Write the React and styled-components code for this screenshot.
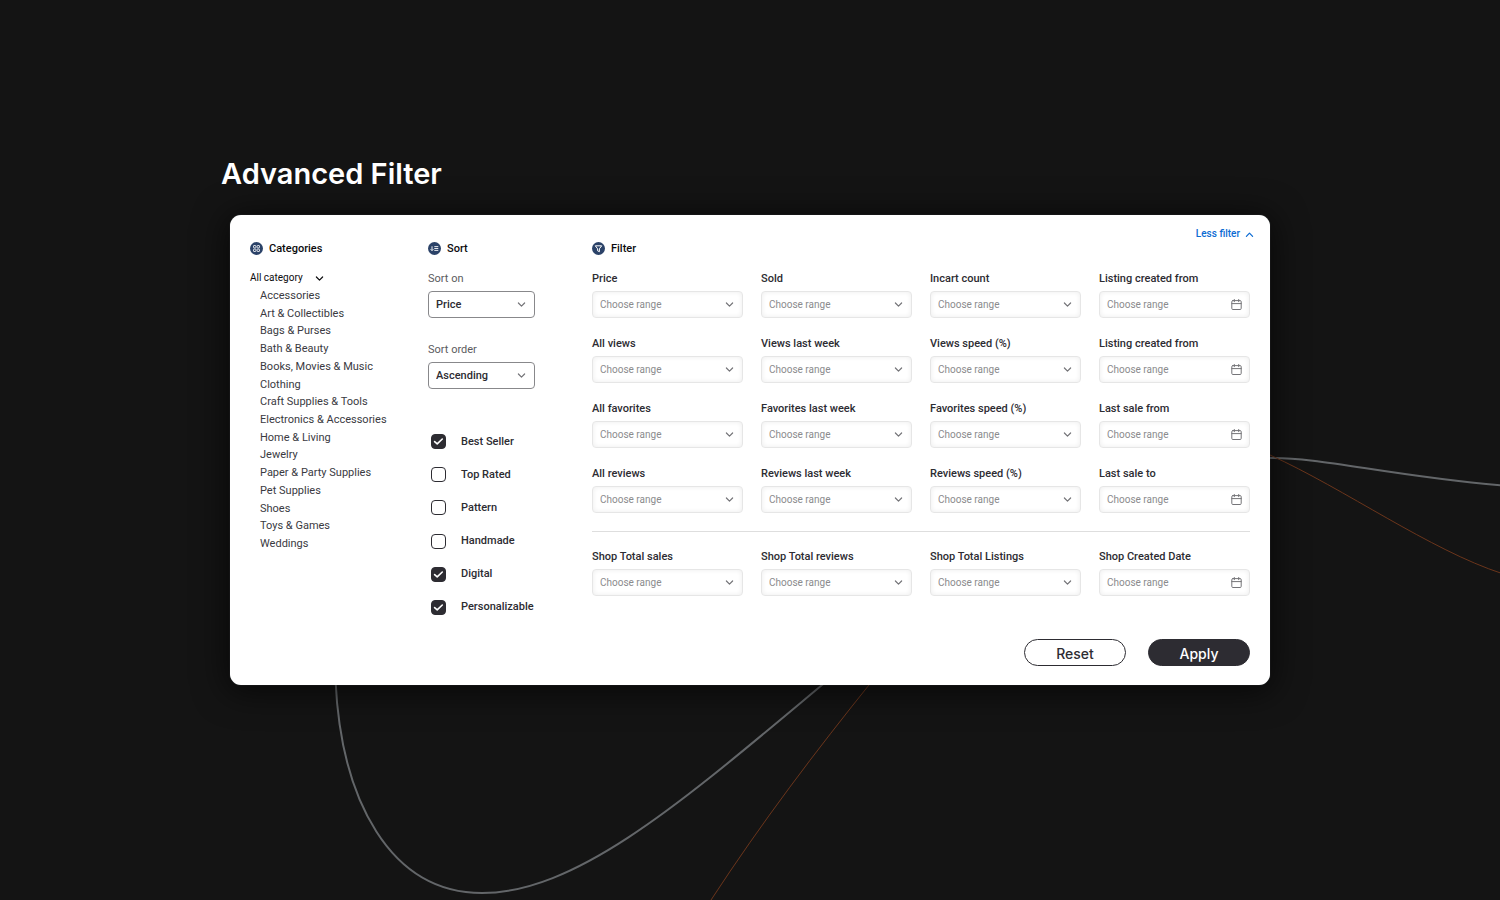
import React, { useState } from "react";
import styled, { createGlobalStyle, css } from "styled-components";

const GlobalStyle = createGlobalStyle`
  *, *::before, *::after { box-sizing: border-box; }
  body {
    margin: 0;
    background: #141414;
    color: #2d2c32;
    font-family: Roboto, "Liberation Sans", sans-serif;
    font-size: 11px;
    line-height: 16px;
  }
  button, input, select { font: inherit; color: inherit; }
`;

const Page = styled.main`
  position: relative;
  min-height: 100vh;
  padding: 154px 20px 40px;
  overflow: hidden;
`;

const Waves = styled.svg`
  position: absolute;
  inset: 0;
  width: 100%;
  height: 100%;
  fill: none;
`;

const Content = styled.div`
  position: relative;
  max-width: 1040px;
  margin: 0 auto;
`;

const Title = styled.h1`
  margin: 0 0 21px -9px;
  color: #fff;
  font-family: Inter, sans-serif;
  font-size: 29px;
  font-weight: 600;
  line-height: 40px;
`;

const Card = styled.form`
  padding: 11px 16px 19px 20px;
  border-radius: 11px;
  background: #fff;
  box-shadow: 0 0 1px #5a6164, 0 4px 32px 4px rgba(0, 0, 0, 0.6);
`;

const TopBar = styled.div`
  display: flex;
  justify-content: flex-end;
`;

const LessButton = styled.button`
  display: flex;
  align-items: center;
  gap: 5px;
  padding: 0;
  border: 0;
  background: none;
  color: #0b6bd3;
  font-size: 10px;
  font-weight: 500;
  cursor: pointer;
`;

const Columns = styled.div`
  display: grid;
  grid-template-columns: 178px 164px minmax(0, 1fr);
  padding-right: 4px;
`;

const Heading = styled.h2`
  display: flex;
  align-items: center;
  gap: 6px;
  height: 13px;
  margin: 0 0 16px;
  color: #0c0c0e;
  font-size: 11px;
  font-weight: 500;
`;

const Badge = styled.svg`
  width: 13px;
  height: 13px;
  fill: none;
  stroke: #fff;
`;

const AllCategory = styled.button`
  display: flex;
  align-items: center;
  gap: 12px;
  height: 14px;
  padding: 0;
  border: 0;
  background: none;
  color: #0c0c0e;
  font-size: 10px;
  cursor: pointer;
`;

const CategoryList = styled.ul`
  display: flex;
  flex-direction: column;
  height: 266px;
  margin: 2px 0 0;
  padding: 0 0 0 10px;
  list-style: none;
`;

const CategoryItem = styled.li`
  display: flex;
  flex: 1;
  align-items: center;
`;

const CategoryLink = styled.a`
  color: #3a3a3f;
  text-decoration: none;
`;

const SortFields = styled.div`
  display: grid;
  gap: 24px;
  width: 107px;
  margin-bottom: 44px;
`;

const Field = styled.div`
  display: grid;
  gap: 4px;
`;

const Label = styled.label`
  font-weight: ${(p) => (p.$light ? 400 : 500)};
  color: ${(p) => (p.$light ? "#5b5b60" : "#2d2c32")};
`;

const Control = styled.div`
  display: grid;
  align-items: center;

  > * { grid-area: 1 / 1; }
`;

const boxStyle = css`
  width: 100%;
  height: 27px;
  padding: 0 7px;
  border: 1px solid #e6e6e6;
  border-radius: 4px;
  outline: 0;
  appearance: none;
  background: #fff;
  box-shadow: inset 0 0 5px rgba(0, 0, 0, 0.08);
  color: #8b8b8d;
  font-size: 10px;
`;

const Select = styled.select`
  ${boxStyle}
  ${(p) =>
    p.$strong &&
    css`
      border-color: #88888b;
      box-shadow: none;
      color: #2d2c32;
      font-size: 11px;
      font-weight: 500;
    `}
`;

const DateInput = styled.input`
  ${boxStyle}
  &::placeholder { color: #8b8b8d; opacity: 1; }
`;

const Glyph = styled.svg`
  width: ${(p) => p.$size}px;
  height: ${(p) => p.$size}px;
  fill: none;
  stroke: currentColor;
  stroke-linecap: round;
  stroke-linejoin: round;
  pointer-events: none;
`;

const EndIcon = styled.span`
  display: flex;
  justify-content: center;
  justify-self: end;
  width: 11px;
  margin-right: 8px;
  color: #747478;
  pointer-events: none;
`;

const Checks = styled.div`
  display: flex;
  flex-direction: column;
  justify-content: space-between;
  height: 183px;
`;

const CheckRow = styled.label`
  display: flex;
  align-items: center;
  gap: 15px;
  height: 17px;
  padding-left: 3px;
  font-weight: 500;
  cursor: pointer;
`;

const CheckBox = styled(Control)`
  justify-items: center;
  color: #fff;
`;

const CheckInput = styled.input`
  width: 15px;
  height: 15px;
  margin: 0;
  border: 1px solid #2d2c32;
  border-radius: 4px;
  appearance: none;
  background: #fff;

  &:checked { background: #2d2c32; }
`;

const FilterGrid = styled.div`
  display: grid;
  grid-template-columns: repeat(4, minmax(0, 1fr));
  gap: 18px;
`;

const Divider = styled.hr`
  height: 1px;
  margin: 18px 0 17px;
  border: 0;
  background: #dedede;
`;

const Actions = styled.div`
  display: flex;
  justify-content: flex-end;
  gap: 22px;
  margin-top: 23px;
  padding-right: 4px;
`;

const ActionButton = styled.button`
  width: 102px;
  height: 27px;
  padding: 2px 0 0;
  border: 1px solid #2d2c32;
  border-radius: 14px;
  background: ${(p) => (p.$primary ? "#2d2c32" : "#fff")};
  color: ${(p) => (p.$primary ? "#fff" : "#2d2c32")};
  font-family: Inter, sans-serif;
  font-size: 14px;
  font-weight: 500;
  cursor: pointer;
`;

const Chevron = ({ up }) => (
  <Glyph $size={9} viewBox="0 0 9 9" strokeWidth="1.2" aria-hidden="true">
    <path d={up ? "M1.4 6.4 4.5 3.2 7.6 6.4" : "M1.4 3 4.5 6.1 7.6 3"} />
  </Glyph>
);

const CalendarIcon = () => (
  <Glyph $size={11} viewBox="0 0 11 11" strokeWidth="1" aria-hidden="true">
    <rect x="0.8" y="1.6" width="9.4" height="8.9" rx="1.1" />
    <path d="M0.8 4.6h9.4M3.3 0.5v2.2M7.7 0.5v2.2" />
  </Glyph>
);

const CheckMark = () => (
  <Glyph $size={11} viewBox="0 0 11 11" strokeWidth="1.6" aria-hidden="true">
    <path d="M1.6 5.6 4.2 7.9 9.3 3" />
  </Glyph>
);

const badgeShapes = {
  grid: (
    <g strokeWidth="0.8">
      <rect x="3.5" y="3.5" width="2.4" height="2.4" rx="0.5" />
      <rect x="7.1" y="3.5" width="2.4" height="2.4" rx="0.5" />
      <rect x="3.5" y="7.1" width="2.4" height="2.4" rx="0.5" />
      <rect x="7.1" y="7.1" width="2.4" height="2.4" rx="0.5" />
    </g>
  ),
  sort: (
    <path strokeWidth="0.9" d="M4 4.3v4.2M2.6 7.2 4 8.6l1.4-1.4M6.3 4.6h4M6.3 6.5h4M6.3 8.4h4" />
  ),
  funnel: (
    <path strokeWidth="1" strokeLinejoin="round" d="M3.3 3.8h6.4L7.4 6.8v2.9L5.6 8.8v-2z" />
  ),
};

const HeadingIcon = ({ name }) => (
  <Badge viewBox="0 0 13 13" aria-hidden="true">
    <circle cx="6.5" cy="6.5" r="6.5" fill="#2b4268" stroke="none" />
    {badgeShapes[name]}
  </Badge>
);

const categories = [
  "Accessories", "Art & Collectibles", "Bags & Purses", "Bath & Beauty",
  "Books, Movies & Music", "Clothing", "Craft Supplies & Tools",
  "Electronics & Accessories", "Home & Living", "Jewelry",
  "Paper & Party Supplies", "Pet Supplies", "Shoes", "Toys & Games", "Weddings",
];

const sortFields = [
  { id: "sort-on", label: "Sort on", options: ["Price", "Sold", "Views"] },
  { id: "sort-order", label: "Sort order", options: ["Ascending", "Descending"] },
];

const productFilters = [
  "Price", "Sold", "Incart count", "Listing created from",
  "All views", "Views last week", "Views speed (%)", "Listing created from",
  "All favorites", "Favorites last week", "Favorites speed (%)", "Last sale from",
  "All reviews", "Reviews last week", "Reviews speed (%)", "Last sale to",
];

const shopFilters = [
  "Shop Total sales", "Shop Total reviews", "Shop Total Listings", "Shop Created Date",
];

function RangeField({ id, label, isDate }) {
  return (
    <Field>
      <Label htmlFor={id}>{label}</Label>
      <Control>
        {isDate ? (
          <DateInput id={id} type="text" placeholder="Choose range" />
        ) : (
          <Select id={id}>
            <option>Choose range</option>
          </Select>
        )}
        <EndIcon>{isDate ? <CalendarIcon /> : <Chevron />}</EndIcon>
      </Control>
    </Field>
  );
}

function RangeGrid({ name, labels }) {
  return (
    <FilterGrid>
      {labels.map((label, i) => (
        <RangeField key={i} id={`${name}-${i}`} label={label} isDate={i % 4 === 3} />
      ))}
    </FilterGrid>
  );
}

export default function App() {
  const [checks, setChecks] = useState({
    "Best Seller": true,
    "Top Rated": false,
    Pattern: false,
    Handmade: false,
    Digital: true,
    Personalizable: true,
  });

  return (
    <Page>
      <GlobalStyle />
      <Waves viewBox="0 0 1500 900" preserveAspectRatio="xMidYMid slice" aria-hidden="true">
        <g stroke="#636669" strokeWidth="2">
          <path d="M335.500 680C341 800 390 893 482 893C580 893 690 795 828 680" />
          <path d="M1260 458H1270C1320 457 1390 476 1502 485.500" />
        </g>
        <g stroke="#6b351b" strokeWidth="1">
          <path d="M711 900C762 822 815 752 873 680" />
          <path d="M1260 451L1270 455C1345 489 1430 550 1502 573.500" />
        </g>
      </Waves>
      <Content>
        <Title>Advanced Filter</Title>
        <Card onSubmit={(e) => e.preventDefault()}>
          <TopBar>
            <LessButton type="button">
              Less filter
              <Chevron up />
            </LessButton>
          </TopBar>
          <Columns>
            <section>
              <Heading><HeadingIcon name="grid" />Categories</Heading>
              <AllCategory type="button">
                All category
                <Chevron />
              </AllCategory>
              <CategoryList>
                {categories.map((name) => (
                  <CategoryItem key={name}>
                    <CategoryLink href="#">{name}</CategoryLink>
                  </CategoryItem>
                ))}
              </CategoryList>
            </section>
            <section>
              <Heading><HeadingIcon name="sort" />Sort</Heading>
              <SortFields>
                {sortFields.map(({ id, label, options }) => (
                  <Field key={id}>
                    <Label $light htmlFor={id}>{label}</Label>
                    <Control>
                      <Select $strong id={id}>
                        {options.map((o) => <option key={o}>{o}</option>)}
                      </Select>
                      <EndIcon><Chevron /></EndIcon>
                    </Control>
                  </Field>
                ))}
              </SortFields>
              <Checks>
                {Object.entries(checks).map(([name, on]) => (
                  <CheckRow key={name}>
                    <CheckBox>
                      <CheckInput
                        type="checkbox"
                        checked={on}
                        onChange={() => setChecks({ ...checks, [name]: !on })}
                      />
                      {on && <CheckMark />}
                    </CheckBox>
                    {name}
                  </CheckRow>
                ))}
              </Checks>
            </section>
            <section>
              <Heading><HeadingIcon name="funnel" />Filter</Heading>
              <RangeGrid name="product" labels={productFilters} />
              <Divider />
              <RangeGrid name="shop" labels={shopFilters} />
            </section>
          </Columns>
          <Actions>
            <ActionButton type="reset">Reset</ActionButton>
            <ActionButton type="submit" $primary>Apply</ActionButton>
          </Actions>
        </Card>
      </Content>
    </Page>
  );
}
